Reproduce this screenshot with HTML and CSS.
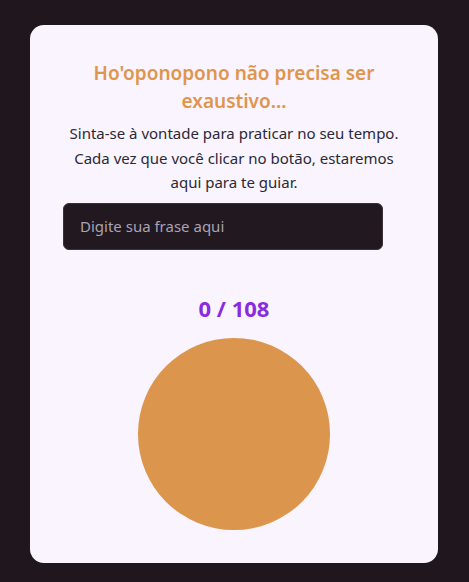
FILE: index.html
```html
<!DOCTYPE html>
<html lang="pt">
<head>
<meta charset="utf-8">
<link rel="stylesheet" href="styles.css">
</head>
<body>
<main class="card">
  <h1 class="title">Ho'oponopono não precisa ser exaustivo...</h1>
  <p class="subtitle">Sinta-se à vontade para praticar no seu tempo. Cada vez que você clicar no botão, estaremos aqui para te guiar.</p>
  <input class="phrase" type="text" placeholder="Digite sua frase aqui">
  <div class="counter">0 / 108</div>
  <button class="circle" type="button" aria-label="Contar"></button>
</main>
</body>
</html>
```
FILE: styles.css
```css
* { box-sizing: border-box; }
html, body {
  margin: 0;
  padding: 0;
  background: #1f161e;
  height: 100%;
}
body {
  font-family: "Noto Sans", "Open Sans", sans-serif;
  padding: 25px 31px 19px 30px;
}
.card {
  background: #f9f4fd;
  border-radius: 14px;
  width: 408px;
  height: 538px;
  padding: 34px 33px 33px 33px;
  display: flex;
  flex-direction: column;
  align-items: stretch;
}
.title {
  margin: 0;
  font-size: 19px;
  line-height: 28px;
  font-weight: 600;
  color: #e0954e;
  text-align: center;
  padding: 0 30px;
}
.subtitle {
  margin: 6px 0 0;
  font-size: 15px;
  line-height: 24.5px;
  color: #2b2935;
  text-align: center;
}
.phrase {
  margin-top: 8px;
  width: 320px;
  height: 48px;
  border: 1px solid #3a3036;
  border-radius: 6px;
  background: #211820;
  padding: 0 16px;
  font-family: inherit;
  font-size: 15px;
  color: #e8e0ea;
  outline: none;
}
.phrase::placeholder { color: #a9a3b3; }
.counter {
  margin-top: 42px;
  text-align: center;
  font-size: 22px;
  line-height: 32px;
  font-weight: 700;
  color: #8a2be2;
}
.circle {
  margin: 14px auto 0;
  width: 192px;
  height: 192px;
  border-radius: 50%;
  border: none;
  background: #db954d;
  padding: 0;
  cursor: pointer;
}
```
